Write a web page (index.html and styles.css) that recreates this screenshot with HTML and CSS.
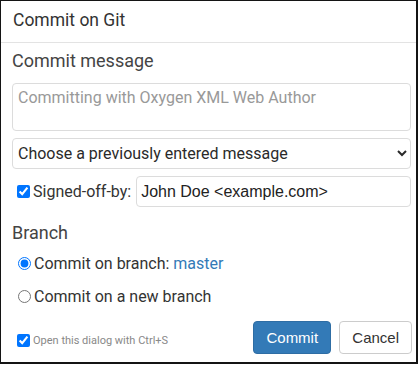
FILE: index.html
```html
<!DOCTYPE html>
<html lang="en">
<head>
    <meta charset="UTF-8">
    <meta name="viewport" content="width=device-width, initial-scale=1.0">
    <title>Commit on Git</title>
    <link rel="stylesheet" href="styles.css">
</head>
<body>
    <div class="dialog">
        <div class="dialog-title">Commit on Git</div>
        <div class="dialog-body">
            <div class="section-label">Commit message</div>
            <textarea class="message" placeholder="Committing with Oxygen XML Web Author"></textarea>
            <select class="history">
                <option>Choose a previously entered message</option>
            </select>
            <div class="signed-row">
                <label class="check">
                    <input type="checkbox" checked>
                    <span>Signed-off-by:</span>
                </label>
                <input type="text" class="signer" value="John Doe <example.com>">
            </div>

            <div class="section-label branch-label">Branch</div>
            <label class="radio">
                <input type="radio" name="branch" checked>
                <span>Commit on branch: <a class="branch-name">master</a></span>
            </label>
            <label class="radio">
                <input type="radio" name="branch">
                <span>Commit on a new branch</span>
            </label>

            <div class="footer">
                <label class="shortcut">
                    <input type="checkbox" checked>
                    <span>Open this dialog with Ctrl+S</span>
                </label>
                <div class="actions">
                    <button class="btn primary">Commit</button>
                    <button class="btn">Cancel</button>
                </div>
            </div>
        </div>
    </div>
</body>
</html>
```
FILE: styles.css
```css
body {
    margin: 0;
    font-family: Roboto, "Liberation Sans", sans-serif;
    color: #333;
    background: #fff;
}

.dialog {
    width: 415px;
    height: 361px;
    border-style: solid;
    border-color: #141414;
    border-width: 1px 2px 2px 1px;
    background: #fff;
}

.dialog-title {
    height: 41px;
    line-height: 38px;
    padding-left: 12px;
    font-size: 17.5px;
    color: #333;
    border-bottom: 1px solid #e3e3e3;
}

.dialog-body {
    padding: 7px 4px 0 11px;
}

.section-label {
    font-size: 18px;
    line-height: 22px;
    color: #444;
}

.message {
    display: block;
    box-sizing: border-box;
    width: 399px;
    height: 48px;
    margin-top: 11px;
    padding: 4px 5px;
    border: 1px solid #dcdcdc;
    border-radius: 4px;
    font-family: Roboto, sans-serif;
    font-size: 16px;
    line-height: 20px;
    resize: none;
    outline: none;
}

.message::placeholder {
    color: #999;
}

.history {
    display: block;
    box-sizing: border-box;
    width: 399px;
    height: 31px;
    margin-top: 7px;
    padding: 0 1px;
    border: 1px solid #dcdcdc;
    border-radius: 4px;
    background: #fff;
    font-family: Roboto, sans-serif;
    font-size: 16px;
    color: #2a2a2a;
}

.signed-row {
    display: flex;
    align-items: center;
    width: 399px;
    margin-top: 7px;
    height: 31px;
}

.check {
    display: flex;
    align-items: center;
    flex-shrink: 0;
    white-space: nowrap;
    font-size: 16px;
    color: #333;
}

.check input {
    width: 13px;
    height: 13px;
    margin: 0 3px 0 5px;
}

.signer {
    flex: 1;
    min-width: 0;
    box-sizing: border-box;
    height: 31px;
    margin-left: 5px;
    padding: 0 4px;
    border: 1px solid #dcdcdc;
    border-radius: 4px;
    font-family: "Liberation Sans", Arial, sans-serif;
    font-size: 16px;
    color: #222;
    outline: none;
}

.branch-label {
    margin-top: 15px;
}

.radio {
    display: flex;
    align-items: center;
    height: 33px;
    font-size: 16px;
    color: #333;
}

.radio:first-of-type {
    margin-top: 3px;
}

.radio input {
    width: 13px;
    height: 13px;
    margin: 0 3px 0 6px;
}

.branch-name {
    color: #337ab7;
}

.footer {
    display: flex;
    justify-content: space-between;
    align-items: center;
    margin-top: 8px;
    width: 400px;
}

.shortcut {
    display: flex;
    align-items: center;
    font-size: 11px;
    color: #888;
    margin-top: 5px;
}

.shortcut input {
    width: 13px;
    height: 13px;
    margin: 0 3px 0 5px;
}

.actions {
    display: flex;
    gap: 8px;
}

.btn {
    box-sizing: border-box;
    height: 33px;
    padding: 0 12px;
    border: 1px solid #ccc;
    border-radius: 4px;
    background: #fff;
    font-family: "Liberation Sans", Arial, sans-serif;
    font-size: 15px;
    color: #333;
    cursor: pointer;
}

.btn.primary {
    width: 78px;
    background: #337ab7;
    border-color: #2e6da4;
    color: #fff;
}
```
